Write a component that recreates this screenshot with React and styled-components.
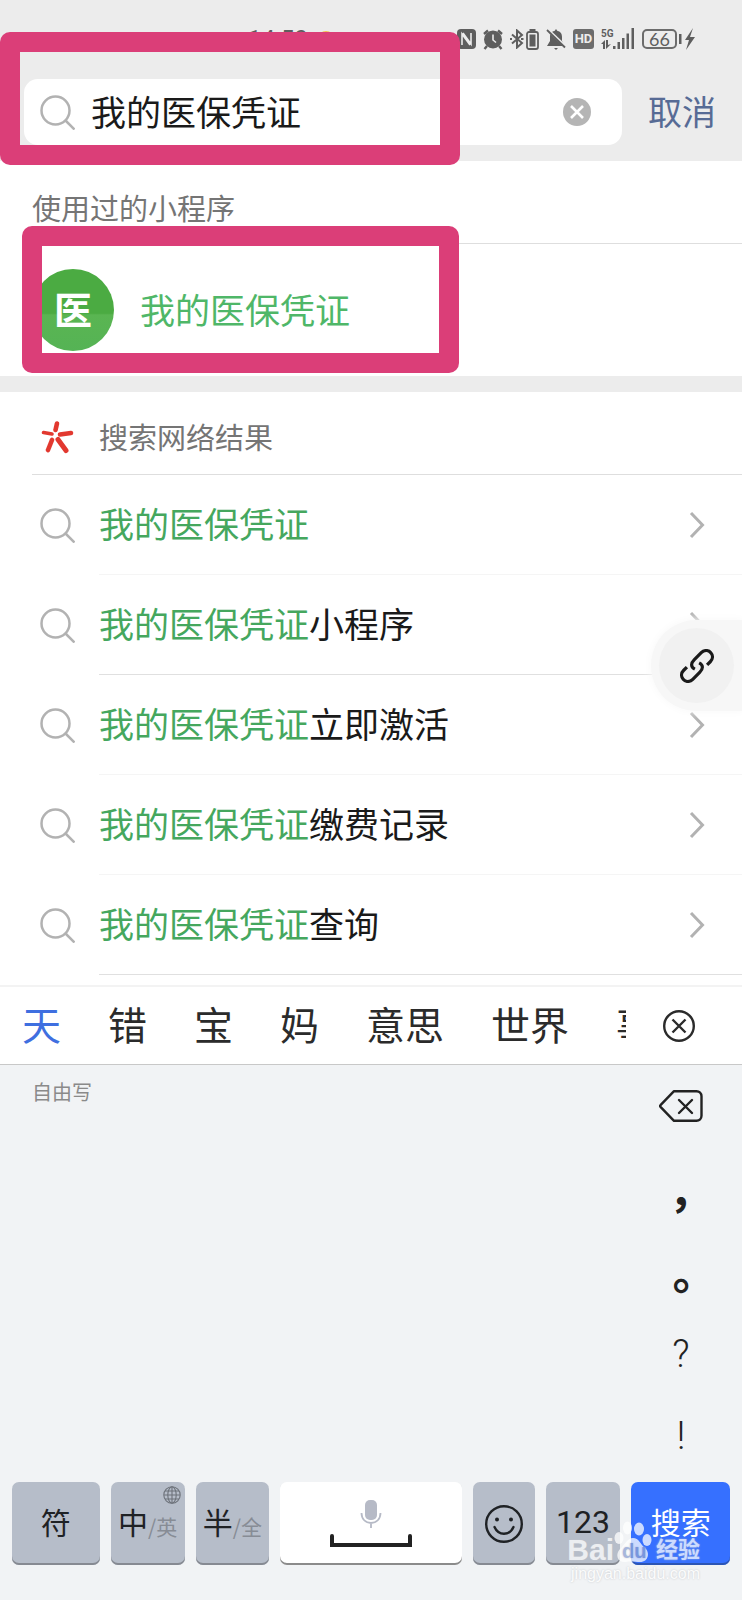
import { useState } from "react";
import styled, { createGlobalStyle } from "styled-components";

const GlobalStyle = createGlobalStyle`
  *,
  *::before {
    box-sizing: border-box;
  }

  body {
    margin: 0;
    background: #fff;
    color: #1a1a1a;
    font-family: "Noto Sans CJK SC", "Noto Sans", sans-serif;
  }

  button,
  input {
    margin: 0;
    padding: 0;
    border: none;
    outline: none;
    background: none;
    color: inherit;
    font-family: inherit;
  }

  svg {
    display: block;
    flex-shrink: 0;
  }
`;

const Page = styled.div`
  display: flex;
  flex-direction: column;
  min-height: 100vh;
  position: relative;
  overflow: hidden;
`;

const Header = styled.header`
  position: relative;
  background: #ececec;
  padding: 28px 0 16px;
`;

const StatusBar = styled.div`
  display: flex;
  align-items: center;
  justify-content: flex-end;
  height: 22px;
  padding-right: 47px;
  color: #5e5e5e;
`;

const StatusLeft = styled.div`
  display: flex;
  align-items: center;
  gap: 10px;
  flex: 1;
  padding-left: 248px;
  font-family: Roboto, sans-serif;
  font-size: 24px;
  line-height: 22px;
`;

const StatusIcons = styled.div`
  display: flex;
  align-items: center;
  gap: 7px;
`;

const IconPair = styled.span`
  display: flex;
  align-items: center;
  gap: 2px;
`;

const HdBadge = styled.span`
  width: 21px;
  height: 20px;
  border-radius: 3px;
  background: #6c6c6c;
  color: #ececec;
  font-family: Roboto, sans-serif;
  font-size: 13px;
  font-weight: 700;
  line-height: 20px;
  text-align: center;
`;

const BatteryLevel = styled.span`
  width: 35px;
  height: 20px;
  border: 2px solid #6c6c6c;
  border-radius: 5px;
  font-family: Lato, sans-serif;
  font-size: 18px;
  line-height: 16px;
  text-align: center;
`;

const SearchRow = styled.form`
  display: flex;
  align-items: center;
  padding: 29px 26px 0 24px;
  gap: 26px;
`;

const SearchBox = styled.label`
  display: flex;
  align-items: center;
  flex: 1;
  min-width: 0;
  height: 66px;
  padding: 0 31px 0 16px;
  gap: 16px;
  border-radius: 14px;
  background: #fff;
`;

const SearchInput = styled.input`
  flex: 1;
  min-width: 0;
  height: 56px;
  padding-bottom: 4px;
  font-size: 35px;
`;

const ClearButton = styled.button`
  width: 28px;
  height: 28px;
`;

const CancelButton = styled.button`
  padding-bottom: 2px;
  color: #576b95;
  font-size: 34px;
  line-height: 50px;
`;

const Highlight = styled.div`
  position: absolute;
  left: ${(p) => p.$left}px;
  top: ${(p) => p.$top}px;
  width: ${(p) => p.$width}px;
  height: ${(p) => p.$height}px;
  border-radius: 10px;
  pointer-events: none;
  overflow: hidden;
  z-index: 1;

  /* keeps the inner corners square while the outer ones are round */
  &::before {
    content: "";
    display: block;
    height: 100%;
    border: 20px solid #db3e78;
  }
`;

const Used = styled.section`
  position: relative;
  border-bottom: 16px solid #ececec;
`;

const UsedTitle = styled.h2`
  margin: 0 0 0 32px;
  padding: 26px 0 16px;
  border-bottom: 1px solid #dedede;
  color: #757575;
  font-size: 29px;
  font-weight: 400;
  line-height: 40px;
`;

const MiniProgram = styled.a`
  display: flex;
  align-items: center;
  gap: 26px;
  height: 132px;
  padding-left: 32px;
  color: #4fb768;
  font-size: 35px;
  text-decoration: none;
`;

const Avatar = styled.span`
  width: 82px;
  height: 82px;
  border-radius: 50%;
  background: linear-gradient(#4bab42 54%, #5ab552 56%, #55b355);
  color: #fff;
  font-size: 38px;
  font-weight: 700;
  line-height: 78px;
  text-align: center;
`;

const RowText = styled.span`
  padding-bottom: 4px;
`;

const WebTitle = styled.h2`
  display: flex;
  align-items: center;
  gap: 24px;
  margin: 0 0 0 32px;
  padding: 24px 0 18px 8px;
  border-bottom: 1px solid #dedede;
  color: #757575;
  font-size: 29px;
  font-weight: 400;
  line-height: 40px;
`;

const Results = styled.ul`
  margin: 0;
  padding: 0 0 10px;
  list-style: none;
`;

const Result = styled.a`
  display: flex;
  align-items: center;
  gap: 24px;
  padding-left: 40px;
  color: #1a1a1a;
  font-size: 35px;
  text-decoration: none;
`;

const ResultBody = styled.span`
  display: flex;
  align-items: center;
  justify-content: space-between;
  flex: 1;
  height: 100px;
  padding-right: 37px;
  border-bottom: 1px solid ${(p) => (p.$faint ? "#f5f5f5" : "#e0e0e0")};
`;

const Match = styled.em`
  color: #45a75e;
  font-style: normal;
`;

const FloatingTab = styled.button`
  position: absolute;
  right: 0;
  top: 620px;
  display: flex;
  align-items: center;
  width: 91px;
  height: 91px;
  padding-left: 8px;
  border-radius: 46px 0 0 46px;
  background: #f7f7f7;
  box-shadow: 0 0 8px 1px #f9f9f9;
`;

const FloatingDisc = styled.span`
  display: flex;
  align-items: center;
  justify-content: center;
  width: 75px;
  height: 75px;
  border-radius: 50%;
  background: #f1f1f1;
`;

const Candidates = styled.div`
  display: flex;
  align-items: center;
  border-top: 2px solid #f3f3f3;
  border-bottom: 1px solid #c8c8c8;
  padding-right: 47px;
  gap: 37px;
`;

const CandidateList = styled.div`
  display: flex;
  flex: 1;
  gap: 47px;
  min-width: 0;
  overflow: hidden;
  padding-left: 22px;
`;

const Candidate = styled.button`
  flex-shrink: 0;
  height: 77px;
  padding-bottom: 6px;
  color: ${(p) => (p.$active ? "#3f6fe0" : "#2b2b2b")};
  font-size: 39px;
  line-height: 60px;
`;

const Keyboard = styled.section`
  display: flex;
  flex-direction: column;
  flex: 1;
  background: #f1f3f5;
`;

const WritingArea = styled.div`
  display: flex;
  justify-content: space-between;
  flex: 1;
  padding-left: 32px;
`;

const ModeLabel = styled.span`
  padding-top: 13px;
  color: #8a8a8a;
  font-size: 20px;
  line-height: 28px;
`;

const SideKeys = styled.div`
  display: flex;
  flex-direction: column;
  width: 122px;
  color: #222;
`;

const DeleteKey = styled.button`
  display: flex;
  align-items: center;
  justify-content: center;
  height: 82px;
  margin-bottom: 20px;
`;

const PunctuationGroup = styled.div`
  display: flex;
  flex-direction: column;
  gap: 12px;
`;

const PunctuationKey = styled.button`
  height: 70px;
  font-family: ${(p) => (p.$wide ? '"Noto Sans CJK TC"' : "Roboto")}, sans-serif;
  font-size: ${(p) => (p.$wide ? 44 : 38)}px;
  font-weight: ${(p) => (p.$wide ? 700 : 300)};
  line-height: 68px;
`;

const Keys = styled.div`
  display: grid;
  grid-template-columns: 88fr 74fr 74fr 182fr 62fr 75fr 99fr;
  gap: 11px;
  padding: 0 12px 35px;
`;

const tones = {
  grey: { bg: "#b6bdc9", edge: "#868a92", text: "#1f2225" },
  white: { bg: "#fff", edge: "#8b8b8b", text: "#1f2225" },
  blue: { bg: "#3670ff", edge: "#2c55b4", text: "#fff" },
};

const Key = styled.button`
  position: relative;
  display: flex;
  flex-direction: ${(p) => (p.$column ? "column" : "row")};
  align-items: center;
  justify-content: center;
  gap: ${(p) => (p.$column ? 6 : 0)}px;
  height: 83px;
  border-radius: 7px;
  background: ${(p) => tones[p.$tone || "grey"].bg};
  box-shadow: inset 0 -2px ${(p) => tones[p.$tone || "grey"].edge};
  color: ${(p) => tones[p.$tone || "grey"].text};
  font-size: 30px;
  line-height: 40px;
  white-space: nowrap;
`;

const KeyText = styled.span`
  padding-bottom: 6px;
`;

const Digits = styled(KeyText)`
  padding-bottom: 3px;
  font-family: Roboto, sans-serif;
  font-size: 32px;
`;

const AltMode = styled.small`
  padding-top: 5px;
  color: #878c95;
  font-size: 21px;
  line-height: 30px;
`;

const KeyBadge = styled.span`
  position: absolute;
  top: 4px;
  right: 4px;
`;

const Watermark = styled.div`
  position: absolute;
  right: 42px;
  bottom: 15px;
  color: #fff;
  opacity: 0.75;
  pointer-events: none;
`;

const WatermarkLogo = styled.div`
  display: flex;
  align-items: flex-end;
  font-family: "Liberation Sans", sans-serif;
  font-size: 30px;
  font-weight: 700;
  line-height: 26px;
  text-shadow: 0 0 2px #c4c6c9;
`;

const WatermarkName = styled.span`
  padding: 0 0 3px 4px;
  font-family: "Noto Sans CJK SC", sans-serif;
  font-size: 22px;
`;

const WatermarkUrl = styled.div`
  font-family: "Liberation Sans", sans-serif;
  font-size: 16px;
  line-height: 22px;
  text-align: right;
  text-shadow: 0 0 2px #b4b6b9;
`;

const SearchIcon = () => (
  <svg width="35" height="35" viewBox="0 0 35 35" fill="none" stroke="#b2b2b2" strokeWidth="2.5">
    <circle cx="15.5" cy="15.5" r="14" />
    <path d="M25 25l9.500 9.500" />
  </svg>
);

const ChevronIcon = () => (
  <svg width="16" height="28" viewBox="0 0 16 28" fill="none" stroke="#b2b2b2" strokeWidth="3">
    <path d="M2 2l11.500 12L2 26" />
  </svg>
);

const NfcIcon = () => (
  <svg width="19" height="20" viewBox="0 0 19 20">
    <rect width="19" height="20" rx="4" fill="currentColor" />
    <path d="M5 16V5l8 11M14 4v11L6 4" fill="none" stroke="#ececec" strokeWidth="1.6" />
  </svg>
);

const AlarmIcon = () => (
  <svg width="20" height="21" viewBox="0 0 20 21" fill="none" stroke="currentColor" strokeWidth="2.4">
    <circle cx="10" cy="10.5" r="9" fill="currentColor" stroke="none" />
    <path d="M1 5l4-3.500M19 5l-4-3.500M4 17l-2.500 3M16 17l2.500 3" />
    <path d="M10 5.500v5.500l3 2.500" stroke="#ececec" strokeWidth="1.6" />
  </svg>
);

const BluetoothIcon = () => (
  <svg width="14" height="20" viewBox="0 0 14 20" fill="none" stroke="currentColor" strokeWidth="2">
    <path d="M2 5.500l10 8.500-5 4.500V1.500L12 6l-10 8.500" />
    <path d="M0 10h2M11 10h2.500" strokeWidth="2.2" />
  </svg>
);

const DeviceBatteryIcon = () => (
  <svg width="13" height="21" viewBox="0 0 13 21">
    <rect x="1" y="3" width="11" height="17" rx="2" fill="none" stroke="currentColor" strokeWidth="1.8" />
    <path d="M3.500 0h6v2h-6zM3.500 5.500h6v12h-6z" fill="currentColor" />
  </svg>
);

const MutedIcon = () => (
  <svg width="20" height="21" viewBox="0 0 20 21">
    <path d="M10 0l1.500 2c3.500.8 4.500 3 4.500 6v4l3 5H1l3-5V8c0-3 1-5.200 4.500-6zM8 19h4l-2 2z" fill="currentColor" />
    <path d="M1 0l19 18" stroke="#ececec" strokeWidth="3" />
    <path d="M1 1l18 17.500" stroke="currentColor" strokeWidth="1.8" />
  </svg>
);

const SignalIcon = () => (
  <svg width="34" height="22" viewBox="0 0 34 22" fill="currentColor">
    <text x="0" y="9" fontFamily="Roboto, sans-serif" fontSize="10" fontWeight="700">
      5G
    </text>
    <path d="M12 18h2.500v3H12zM16.500 14H19v7h-2.500zM21 10h2.500v11H21zM25.500 5.500H28V21h-2.500zM30.500 0H33v21h-2.500z" />
    <path d="M0 16l4-4v9H2v-5zM5 12h2v5l3-1-5 5z" />
  </svg>
);

const ChargeIcon = () => (
  <svg width="16" height="22" viewBox="0 0 16 22" fill="currentColor">
    <path d="M0 6h2.500v10H0zM14 0L6 12h4l-3 10 9-13h-5z" />
  </svg>
);

const WeatherIcon = () => (
  <svg width="16" height="18" viewBox="0 0 16 18">
    <circle cx="8" cy="9" r="8" fill="#f5c04c" />
  </svg>
);

const ClearIcon = () => (
  <svg width="28" height="28" viewBox="0 0 28 28">
    <circle cx="14" cy="14" r="14" fill="#b5b5b5" />
    <path d="M8 8l12 12M20 8L8 20" stroke="#fff" strokeWidth="2.6" />
  </svg>
);

const SparkIcon = () => (
  <svg width="35" height="35" viewBox="0 0 35 35" stroke="#e2382f" strokeLinecap="round">
    <path d="M17 4.500l-1.500 6.500" strokeWidth="4.6" />
    <path d="M3.500 13.500l8.500 1.500" strokeWidth="3.6" />
    <path d="M20 15.500l11-1.500" strokeWidth="4.6" />
    <path d="M12 21L8 31" strokeWidth="4.6" />
    <path d="M18 20.500l8 11" strokeWidth="5" />
  </svg>
);

const LinkIcon = () => (
  <svg width="34" height="34" viewBox="0 0 32 32" fill="none" stroke="#1a1a1a" strokeWidth="3">
    <path d="M14 19c-4-2-4-5.500-.5-9l6.500-6.500c3-3 7-2.500 9 0 2.200 2.500 2 6-.5 8.500L25.500 15" />
    <path d="M18 13c4 2 4 5.500.5 9L12 28.500c-3 3-7 2.500-9 0-2.200-2.500-2-6 .5-8.500L6.500 17" />
  </svg>
);

const CloseIcon = () => (
  <svg width="32" height="32" viewBox="0 0 32 32" fill="none" stroke="#2b2b2b" strokeWidth="2.4">
    <circle cx="16" cy="16" r="14.8" />
    <path d="M9.500 9.500l13 13M22.500 9.500l-13 13" />
  </svg>
);

const DeleteIcon = () => (
  <svg
    width="44"
    height="32"
    viewBox="0 0 44 32"
    fill="none"
    stroke="#222"
    strokeWidth="2.4"
    strokeLinecap="round"
    strokeLinejoin="round"
  >
    <path d="M15 1.200h22.500a5 5 0 0 1 5 5v19.600a5 5 0 0 1-5 5H15L1.500 16.800a1.200 1.200 0 0 1 0-1.600z" />
    <path d="M20 10l13 13M33 10L20 23" />
  </svg>
);

const GlobeIcon = () => (
  <svg width="18" height="18" viewBox="0 0 18 18" fill="none" stroke="#6d727a" strokeWidth="1.1">
    <circle cx="9" cy="9" r="8.2" />
    <ellipse cx="9" cy="9" rx="4.2" ry="8.2" />
    <path d="M9 1v16M1 9h16M2 5h14M2 13h14" />
  </svg>
);

const MicIcon = () => (
  <svg width="22" height="28" viewBox="0 0 22 28" fill="none" stroke="#b6bac6" strokeWidth="1.8">
    <rect x="5" y="0" width="12" height="20" rx="5" fill="#b6bac6" stroke="none" />
    <path d="M1.500 13c0 6 4 10 9.500 10s9.500-4 9.500-10M11 23v5" />
  </svg>
);

const SpaceIcon = () => (
  <svg width="82" height="13" viewBox="0 0 82 13" fill="none" stroke="#222" strokeWidth="4" strokeLinecap="round">
    <path d="M2 2v9h78V2" />
  </svg>
);

const SmileIcon = () => (
  <svg width="38" height="38" viewBox="0 0 38 38" fill="none" stroke="#1f2225" strokeWidth="2.4" strokeLinecap="round">
    <circle cx="19" cy="19" r="17.8" />
    <circle cx="12" cy="14.5" r="2" fill="#1f2225" stroke="none" />
    <circle cx="26" cy="14.5" r="2" fill="#1f2225" stroke="none" />
    <path d="M9.500 22c4 9 15 9 19 0" />
  </svg>
);

const PawIcon = () => (
  <svg width="38" height="42" viewBox="0 0 38 42" fill="#fff">
    <ellipse cx="5" cy="17" rx="4.5" ry="6" />
    <ellipse cx="13.5" cy="7" rx="4.5" ry="6.5" />
    <ellipse cx="25" cy="8" rx="5" ry="6.5" />
    <ellipse cx="33" cy="19" rx="4.5" ry="6" />
    <path d="M19 17c6 0 7 6 12 10s4 14-5 14c-4 0-10-1-14 0-9 1-11-8-6-13 5-4 7-11 13-11z" />
    <text x="8" y="37" fill="#8fa3d4" fontFamily="Liberation Sans, sans-serif" fontSize="20" fontWeight="700">
      du
    </text>
  </svg>
);

const QUERY = "我的医保凭证";

const suggestions = [
  { rest: "", faint: true },
  { rest: "小程序" },
  { rest: "立即激活", faint: true },
  { rest: "缴费记录", faint: true },
  { rest: "查询" },
];

const candidates = ["天", "错", "宝", "妈", "意思", "世界", "事"];

const App = () => {
  const [query, setQuery] = useState(QUERY);

  return (
    <>
      <GlobalStyle />
      <Page>
        <Header>
          <StatusBar>
            <StatusLeft>
              14:50
              <WeatherIcon />
            </StatusLeft>
            <StatusIcons>
              <NfcIcon />
              <AlarmIcon />
              <IconPair>
                <BluetoothIcon />
                <DeviceBatteryIcon />
              </IconPair>
              <MutedIcon />
              <HdBadge>HD</HdBadge>
              <SignalIcon />
              <IconPair>
                <BatteryLevel>66</BatteryLevel>
                <ChargeIcon />
              </IconPair>
            </StatusIcons>
          </StatusBar>
          <SearchRow onSubmit={(e) => e.preventDefault()}>
            <SearchBox>
              <SearchIcon />
              <SearchInput
                type="text"
                aria-label="搜索"
                value={query}
                onChange={(e) => setQuery(e.target.value)}
              />
              <ClearButton type="button" aria-label="清除" onClick={() => setQuery("")}>
                <ClearIcon />
              </ClearButton>
            </SearchBox>
            <CancelButton type="button">取消</CancelButton>
          </SearchRow>
          <Highlight $left={0} $top={32} $width={460} $height={133} />
        </Header>

        <Used>
          <UsedTitle>使用过的小程序</UsedTitle>
          <MiniProgram href="#program">
            <Avatar>医</Avatar>
            <RowText>{QUERY}</RowText>
          </MiniProgram>
          <Highlight $left={22} $top={65} $width={437} $height={147} />
        </Used>

        <section>
          <WebTitle>
            <SparkIcon />
            搜索网络结果
          </WebTitle>
          <Results>
            {suggestions.map(({ rest, faint }) => (
              <li key={rest}>
                <Result href="#search">
                  <SearchIcon />
                  <ResultBody $faint={faint}>
                    <RowText>
                      <Match>{QUERY}</Match>
                      {rest}
                    </RowText>
                    <ChevronIcon />
                  </ResultBody>
                </Result>
              </li>
            ))}
          </Results>
        </section>

        <Candidates>
          <CandidateList>
            {candidates.map((word, i) => (
              <Candidate key={word} type="button" $active={i === 0}>
                {word}
              </Candidate>
            ))}
          </CandidateList>
          <button type="button" aria-label="关闭">
            <CloseIcon />
          </button>
        </Candidates>

        <Keyboard>
          <WritingArea>
            <ModeLabel>自由写</ModeLabel>
            <SideKeys>
              <DeleteKey type="button" aria-label="删除">
                <DeleteIcon />
              </DeleteKey>
              <PunctuationGroup lang="zh-Hant">
                <PunctuationKey type="button" $wide>，</PunctuationKey>
                <PunctuationKey type="button" $wide>。</PunctuationKey>
              </PunctuationGroup>
              <PunctuationGroup>
                <PunctuationKey type="button">?</PunctuationKey>
                <PunctuationKey type="button">!</PunctuationKey>
              </PunctuationGroup>
            </SideKeys>
          </WritingArea>
          <Keys>
            <Key type="button">
              <KeyText>符</KeyText>
            </Key>
            <Key type="button">
              <KeyText>中</KeyText>
              <AltMode>/英</AltMode>
              <KeyBadge>
                <GlobeIcon />
              </KeyBadge>
            </Key>
            <Key type="button">
              <KeyText>半</KeyText>
              <AltMode>/全</AltMode>
            </Key>
            <Key type="button" aria-label="空格" $tone="white" $column>
              <MicIcon />
              <SpaceIcon />
            </Key>
            <Key type="button" aria-label="表情">
              <SmileIcon />
            </Key>
            <Key type="button">
              <Digits>123</Digits>
            </Key>
            <Key type="button" $tone="blue">
              <KeyText>搜索</KeyText>
            </Key>
          </Keys>
        </Keyboard>

        <FloatingTab type="button" aria-label="链接">
          <FloatingDisc>
            <LinkIcon />
          </FloatingDisc>
        </FloatingTab>
        <Watermark>
          <WatermarkLogo>
            Bai
            <PawIcon />
            <WatermarkName>经验</WatermarkName>
          </WatermarkLogo>
          <WatermarkUrl>jingyan.baidu.com</WatermarkUrl>
        </Watermark>
      </Page>
    </>
  );
};

export default App;
